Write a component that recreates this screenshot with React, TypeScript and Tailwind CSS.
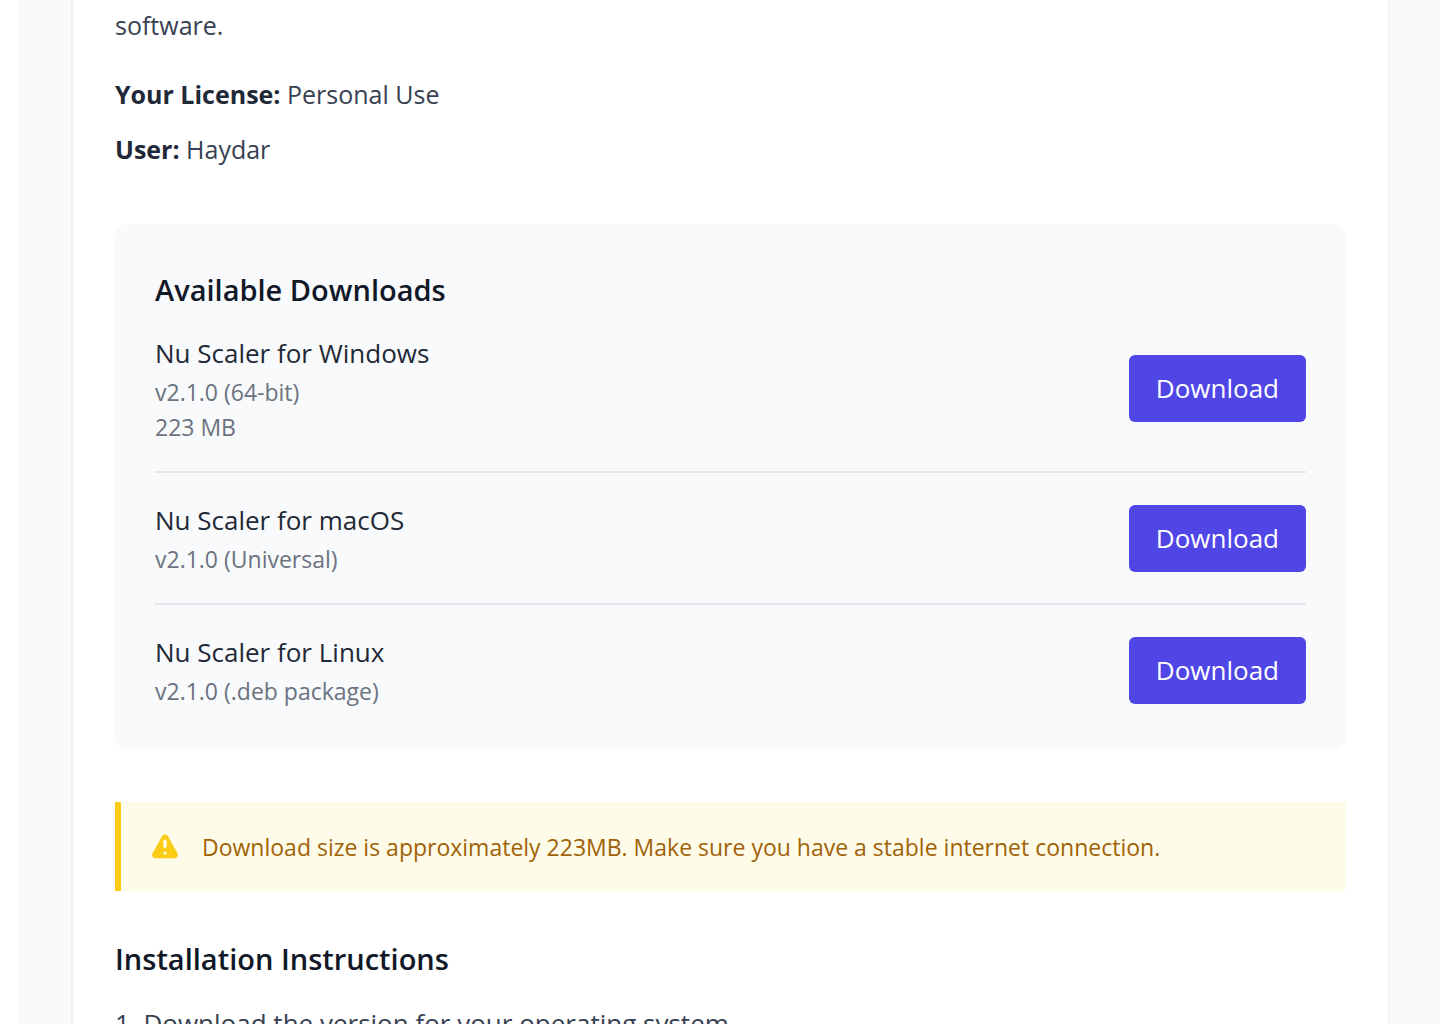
const downloads = [
  { name: 'Nu Scaler for Windows', details: ['v2.1.0 (64-bit)', '223 MB'] },
  { name: 'Nu Scaler for macOS', details: ['v2.1.0 (Universal)'] },
  { name: 'Nu Scaler for Linux', details: ['v2.1.0 (.deb package)'] },
];

function WarningIcon() {
  return (
    <svg viewBox="0 0 20 20" fill="currentColor" className="h-[34px] w-[34px] shrink-0 text-[#facc15]" aria-hidden="true">
      <path
        fillRule="evenodd"
        clipRule="evenodd"
        d="M8.257 3.099c.765-1.36 2.722-1.36 3.486 0l5.58 9.92c.75 1.334-.213 2.98-1.742 2.98H4.42c-1.53 0-2.493-1.646-1.743-2.98l5.58-9.92zM11 13a1 1 0 11-2 0 1 1 0 012 0zm-1-8a1 1 0 00-1 1v3a1 1 0 002 0V6a1 1 0 00-1-1z"
      />
    </svg>
  );
}

export default function App() {
  return (
    <div className="h-screen overflow-hidden bg-white pl-[17px] font-['Open_Sans','Noto_Sans',sans-serif] text-[26px] leading-10 text-[#374151]">
      <div className="h-full bg-[#f9fafb] pr-[50px] pl-[54px]">
        <main className="min-h-full border-x-2 border-[#f0f1f3] bg-white px-[42px] pt-[5px]">
          <p className="text-[25px]">software.</p>
          <p className="mt-[29px] text-[25px]">
            <strong className="font-bold text-[#1f2937]">Your License:</strong> Personal Use
          </p>
          <p className="mt-[15px] text-[25px]">
            <strong className="font-bold text-[#1f2937]">User:</strong> Haydar
          </p>

          <section className="mt-[55px] rounded-xl bg-[#f9fafb] p-10">
            <h2 className="mb-4 text-[29px] leading-[52px] font-semibold text-[#111827]">Available Downloads</h2>
            <ul>
              {downloads.map((item) => (
                <li
                  key={item.name}
                  className="flex items-center justify-between border-b-2 border-[#e5e7eb] py-[26px] first:pt-0 last:border-b-0 last:pb-0"
                >
                  <div>
                    <h3 className="leading-[43px] text-[#1f2937]">{item.name}</h3>
                    {item.details.map((line) => (
                      <p key={line} className="text-[23px] leading-[35px] text-[#6b7280]">
                        {line}
                      </p>
                    ))}
                  </div>
                  <button type="button" className="-my-4 rounded-md bg-[#4f46e5] px-[27px] py-[13px] leading-[41px] text-white">
                    Download
                  </button>
                </li>
              ))}
            </ul>
          </section>

          <div className="mt-[53px] flex items-center gap-5 border-l-6 border-[#facc15] bg-[#fefce8] pt-7 pb-[26px] pl-[27px]">
            <WarningIcon />
            <p className="text-[23px] leading-[35px] text-[#a16207]">
              Download size is approximately 223MB. Make sure you have a stable internet connection.
            </p>
          </div>

          <h2 className="mt-[42px] text-[29px] leading-[52px] font-semibold text-[#111827]">Installation Instructions</h2>
          <ol className="mt-[18px] list-inside list-decimal">
            <li>Download the version for your operating system</li>
          </ol>
        </main>
      </div>
    </div>
  );
}
